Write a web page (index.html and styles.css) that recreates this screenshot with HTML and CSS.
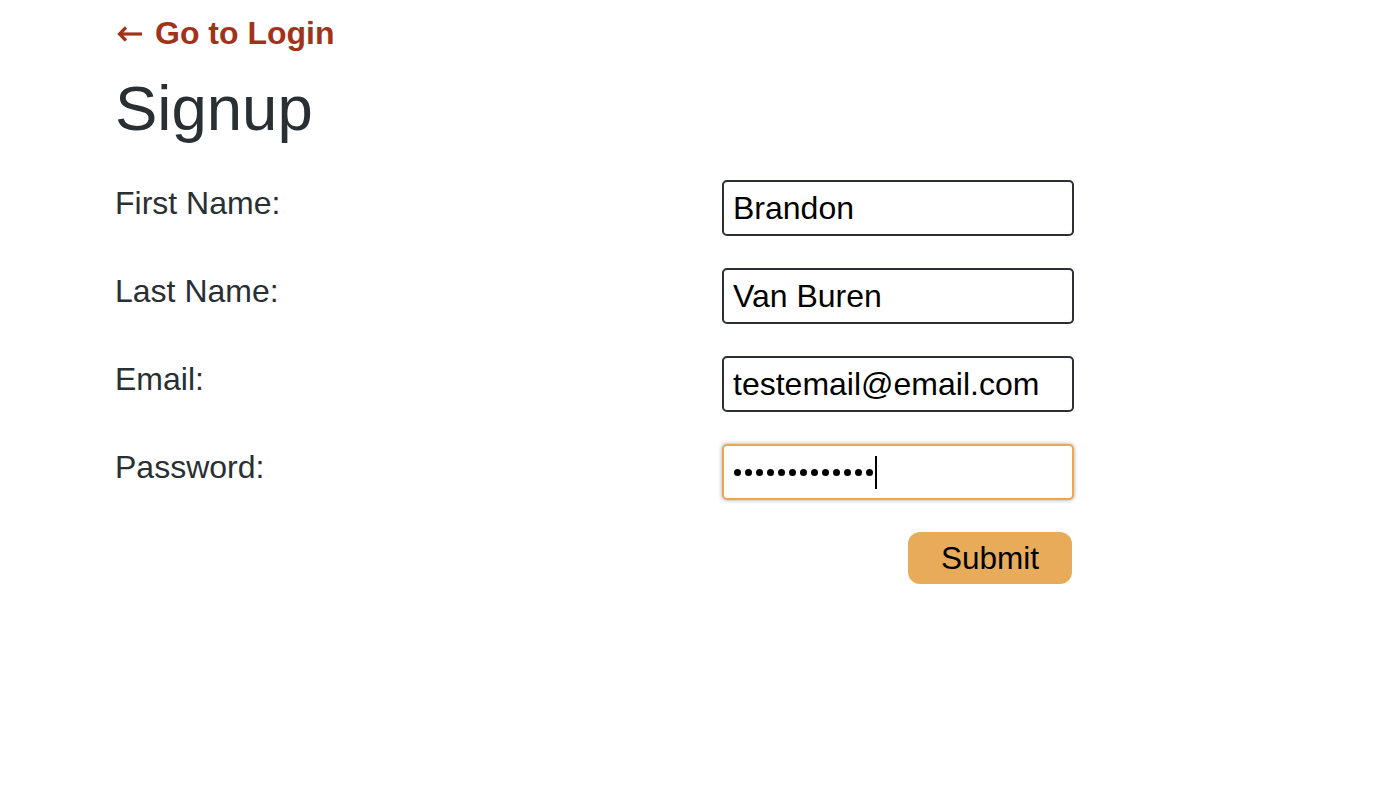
FILE: index.html
```html
<!DOCTYPE html>
<html lang="en">
<head>
<meta charset="utf-8">
<title>Signup</title>
<link rel="stylesheet" href="styles.css">
</head>
<body>
<main class="page">
  <a class="back-link" href="#"><svg class="back-arrow" width="26" height="16" viewBox="0 0 26 16" aria-hidden="true"><path d="M3 8 H25" stroke="currentColor" stroke-width="3.2" fill="none"/><path d="M9 1.5 L2.5 8 L9 14.5" stroke="currentColor" stroke-width="3.2" fill="none" stroke-linejoin="miter"/></svg> Go to Login</a>
  <h1 class="title">Signup</h1>
  <form class="signup-form">
    <label class="field-label" for="first">First Name:</label>
    <input class="field-input" id="first" type="text" value="Brandon">
    <label class="field-label" for="last">Last Name:</label>
    <input class="field-input" id="last" type="text" value="Van Buren">
    <label class="field-label" for="email">Email:</label>
    <input class="field-input" id="email" type="text" value="testemail@email.com">
    <label class="field-label" for="password">Password:</label>
    <div class="field-input is-focused" id="password">
      <span class="dot"></span><span class="dot"></span><span class="dot"></span><span class="dot"></span><span class="dot"></span><span class="dot"></span><span class="dot"></span><span class="dot"></span><span class="dot"></span><span class="dot"></span><span class="dot"></span><span class="dot"></span><span class="dot"></span><span class="caret"></span>
    </div>
    <div class="actions">
      <button class="submit-btn" type="button">Submit</button>
    </div>
  </form>
</main>
</body>
</html>
```

FILE: styles.css
```css
* { box-sizing: border-box; }
html, body { margin: 0; padding: 0; background: #ffffff; }
body {
  font-family: "Liberation Sans", Arial, Helvetica, sans-serif;
  color: #292f33;
}
.page {
  padding: 14px 0 0 115px;
  width: 1376px;
}
.back-link {
  display: inline-flex;
  align-items: center;
  gap: 12px;
  font-size: 32px;
  font-weight: 700;
  color: #a2331b;
  text-decoration: none;
  line-height: 38px;
}
.back-arrow {
  display: block;
  margin-left: 2px;
  margin-top: 1px;
}
.title {
  margin: 20px 0 36px 0;
  font-size: 63.5px;
  font-weight: 400;
  line-height: 72px;
  color: #292f33;
}
.signup-form {
  display: grid;
  grid-template-columns: 607px 352px;
  row-gap: 32px;
  align-items: start;
}
.field-label {
  font-size: 32px;
  line-height: 44px;
  padding-top: 1px;
  color: #292f33;
}
.field-input {
  width: 352px;
  height: 56px;
  border: 2px solid #2c2f33;
  border-radius: 5px;
  padding: 0 9px;
  font-family: "Liberation Sans", Arial, Helvetica, sans-serif;
  font-size: 32px;
  color: #000;
  background: #fff;
  outline: none;
}
.field-input.is-focused {
  border-color: #e9a752;
  box-shadow: 0 0 4px rgba(0,0,0,0.35);
  display: flex;
  align-items: center;
  gap: 4px;
  padding-left: 10px;
}
.dot {
  display: block;
  width: 7px;
  height: 7px;
  border-radius: 50%;
  background: #000;
}
.caret {
  display: block;
  width: 2px;
  height: 33px;
  background: #000;
  margin-left: -2px;
}
.actions {
  grid-column: 2;
  display: flex;
  justify-content: flex-end;
  padding-right: 2px;
}
.submit-btn {
  width: 164px;
  height: 52px;
  border: none;
  border-radius: 12px;
  background: #e8ab5a;
  font-family: "Liberation Sans", Arial, Helvetica, sans-serif;
  font-size: 31.5px;
  color: #000;
  padding: 0;
  cursor: pointer;
}
```
